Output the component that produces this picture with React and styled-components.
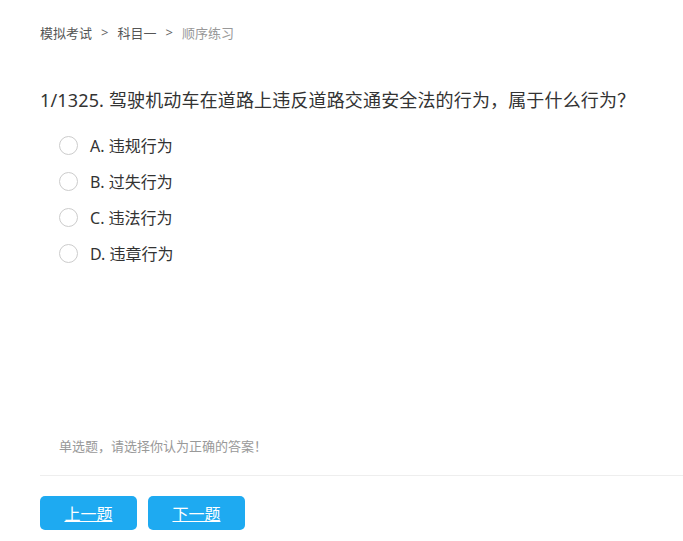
import React, { useState } from 'react';
import styled, { createGlobalStyle } from 'styled-components';

// ============ CSS ============== //
const Global = createGlobalStyle`
  body {
    margin: 0;
    background: #fff;
    font-family: "Noto Sans", "Noto Sans CJK SC", sans-serif;
  }
`;

const Page = styled.div`
  width: 683px;
  height: 541px;
  padding-left: 40px;
  box-sizing: border-box;
  display: flex;
  flex-direction: column;
`;

const Crumbs = styled.div`
  display: flex;
  align-items: center;
  height: 20px;
  margin-top: 22px;
  font-size: 13px;
  color: #555;
`;

const Crumb = styled.span`
  color: ${props => props.current ? '#999' : '#555'};
`;

const Sep = styled.span`
  margin: 0 9px;
  color: #666;
`;

const Question = styled.h3`
  margin: 45px 0 0;
  font-size: 18px;
  font-weight: 400;
  color: #333;
  line-height: 26px;
  letter-spacing: 0.15px;
`;

const Options = styled.div`
  display: flex;
  flex-direction: column;
  margin-top: 14px;
  margin-left: 19px;
`;

const Option = styled.label`
  display: flex;
  align-items: center;
  height: 36px;
  cursor: pointer;
  font-size: 16px;
  color: #333;
`;

const Radio = styled.span`
  width: 17px;
  height: 17px;
  border-radius: 50%;
  border: 1px solid ${props => props.checked ? '#1eaaf1' : '#ccc'};
  background: #fff;
  margin-right: 12px;
  box-sizing: content-box;
  display: flex;
  align-items: center;
  justify-content: center;
  &::after {
    content: '';
    width: 9px;
    height: 9px;
    border-radius: 50%;
    background: ${props => props.checked ? '#1eaaf1' : 'transparent'};
  }
`;

const Hint = styled.p`
  margin: auto 0 0 19px;
  font-size: 13px;
  color: #999;
  line-height: 20px;
`;

const Divider = styled.div`
  height: 1px;
  background: #eee;
  margin-top: 19px;
`;

const Buttons = styled.div`
  display: flex;
  gap: 11px;
  margin-top: 20px;
  margin-bottom: 11px;
`;

const Bttn = styled.a`
  width: 97px;
  height: 34px;
  border-radius: 5px;
  background: #1eaaf1;
  color: #fff;
  font-size: 16px;
  text-decoration: underline;
  display: flex;
  align-items: center;
  justify-content: center;
  cursor: pointer;
`;

// ============ Function ============== //
const options = [
  { key: 'A', text: '违规行为' },
  { key: 'B', text: '过失行为' },
  { key: 'C', text: '违法行为' },
  { key: 'D', text: '违章行为' },
];

const App = () => {
  const [picked, setPicked] = useState(null);

  return (
    <Page>
      <Global />
      <Crumbs>
        <Crumb>模拟考试</Crumb>
        <Sep>&gt;</Sep>
        <Crumb>科目一</Crumb>
        <Sep>&gt;</Sep>
        <Crumb current>顺序练习</Crumb>
      </Crumbs>

      <Question>1/1325. 驾驶机动车在道路上违反道路交通安全法的行为，属于什么行为？</Question>

      <Options>
        {options.map(o => (
          <Option key={o.key} onClick={() => setPicked(o.key)}>
            <Radio checked={picked === o.key} />
            {o.key}. {o.text}
          </Option>
        ))}
      </Options>

      <Hint>单选题，请选择你认为正确的答案！</Hint>
      <Divider />

      <Buttons>
        <Bttn>上一题</Bttn>
        <Bttn>下一题</Bttn>
      </Buttons>
    </Page>
  );
};

export default App;
